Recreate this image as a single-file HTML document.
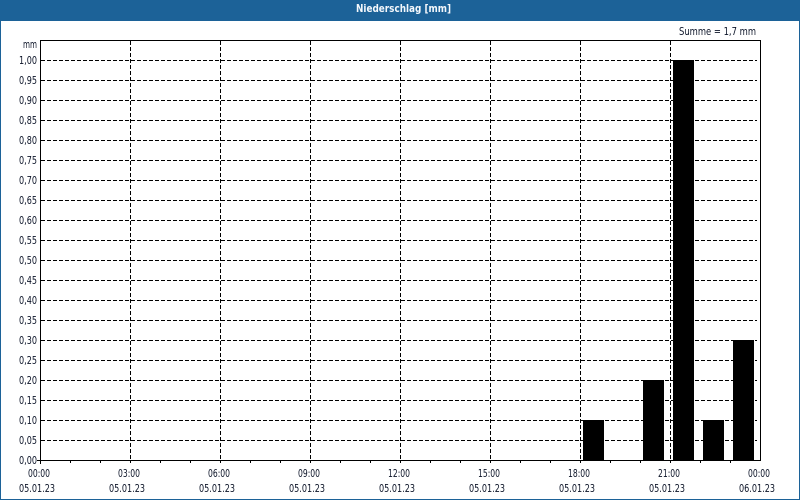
<!DOCTYPE html>
<html><head><meta charset="utf-8"><style>
html,body{margin:0;padding:0;background:#fff;width:800px;height:500px;overflow:hidden}
svg{display:block}
text{font-family:"DejaVu Sans","Liberation Sans",sans-serif;font-size:10.5px;fill:#0c1428}
</style></head><body>
<svg width="800" height="500" viewBox="0 0 800 500" xmlns="http://www.w3.org/2000/svg">
<rect x="0" y="0" width="800" height="500" fill="#1c6298"/>
<rect x="1" y="21" width="798" height="478" fill="#fff"/>
<text x="356" y="12" textLength="95" lengthAdjust="spacingAndGlyphs" style="fill:#f4f8fc;font-weight:bold">Niederschlag [mm]</text>
<text x="679" y="35" textLength="77" lengthAdjust="spacingAndGlyphs">Summe = 1,7 mm</text>
<g stroke="#000" stroke-width="1" stroke-dasharray="4 2" shape-rendering="crispEdges" fill="none">
<path d="M41 60.5H757M41 80.5H757M41 100.5H757M41 120.5H757M41 140.5H757M41 160.5H757M41 180.5H757M41 200.5H757M41 220.5H757M41 240.5H757M41 260.5H757M41 280.5H757M41 300.5H757M41 320.5H757M41 340.5H757M41 360.5H757M41 380.5H757M41 400.5H757M41 420.5H757M41 440.5H757"/>
<path d="M130.5 41V460M220.5 41V460M310.5 41V460M400.5 41V460M490.5 41V460M580.5 41V460M670.5 41V460"/>
</g>
<g fill="#000" shape-rendering="crispEdges">
<rect x="583" y="420" width="21" height="40"/>
<rect x="643" y="380" width="21" height="80"/>
<rect x="673" y="60" width="21" height="400"/>
<rect x="703" y="420" width="21" height="40"/>
<rect x="733" y="340" width="21" height="120"/>
</g>
<g stroke="#000" stroke-width="1" shape-rendering="crispEdges" fill="none">
<path d="M40.5 40V464M40 40.5H760.5V460M37 460.5H761"/>
<path d="M70.5 460V463M100.5 460V463M130.5 460V463M160.5 460V463M190.5 460V463M220.5 460V463M250.5 460V463M280.5 460V463M310.5 460V463M340.5 460V463M370.5 460V463M400.5 460V463M430.5 460V463M460.5 460V463M490.5 460V463M520.5 460V463M550.5 460V463M580.5 460V463M610.5 460V463M640.5 460V463M670.5 460V463M700.5 460V463M730.5 460V463"/>
</g>
<g lengthAdjust="spacingAndGlyphs">
<text x="23" y="48" textLength="14" lengthAdjust="spacingAndGlyphs">mm</text>
<text x="19" y="64" textLength="18" lengthAdjust="spacingAndGlyphs">1,00</text><text x="19" y="84" textLength="18" lengthAdjust="spacingAndGlyphs">0,95</text><text x="19" y="104" textLength="18" lengthAdjust="spacingAndGlyphs">0,90</text><text x="19" y="124" textLength="18" lengthAdjust="spacingAndGlyphs">0,85</text><text x="19" y="144" textLength="18" lengthAdjust="spacingAndGlyphs">0,80</text><text x="19" y="164" textLength="18" lengthAdjust="spacingAndGlyphs">0,75</text><text x="19" y="184" textLength="18" lengthAdjust="spacingAndGlyphs">0,70</text><text x="19" y="204" textLength="18" lengthAdjust="spacingAndGlyphs">0,65</text><text x="19" y="224" textLength="18" lengthAdjust="spacingAndGlyphs">0,60</text><text x="19" y="244" textLength="18" lengthAdjust="spacingAndGlyphs">0,55</text><text x="19" y="264" textLength="18" lengthAdjust="spacingAndGlyphs">0,50</text><text x="19" y="284" textLength="18" lengthAdjust="spacingAndGlyphs">0,45</text><text x="19" y="304" textLength="18" lengthAdjust="spacingAndGlyphs">0,40</text><text x="19" y="324" textLength="18" lengthAdjust="spacingAndGlyphs">0,35</text><text x="19" y="344" textLength="18" lengthAdjust="spacingAndGlyphs">0,30</text><text x="19" y="364" textLength="18" lengthAdjust="spacingAndGlyphs">0,25</text><text x="19" y="384" textLength="18" lengthAdjust="spacingAndGlyphs">0,20</text><text x="19" y="404" textLength="18" lengthAdjust="spacingAndGlyphs">0,15</text><text x="19" y="424" textLength="18" lengthAdjust="spacingAndGlyphs">0,10</text><text x="19" y="444" textLength="18" lengthAdjust="spacingAndGlyphs">0,05</text><text x="19" y="464" textLength="18" lengthAdjust="spacingAndGlyphs">0,00</text>
</g>
<g>
<text x="28" y="477" textLength="22" lengthAdjust="spacingAndGlyphs">00:00</text><text x="118" y="477" textLength="22" lengthAdjust="spacingAndGlyphs">03:00</text><text x="208" y="477" textLength="22" lengthAdjust="spacingAndGlyphs">06:00</text><text x="298" y="477" textLength="22" lengthAdjust="spacingAndGlyphs">09:00</text><text x="388" y="477" textLength="22" lengthAdjust="spacingAndGlyphs">12:00</text><text x="478" y="477" textLength="22" lengthAdjust="spacingAndGlyphs">15:00</text><text x="568" y="477" textLength="22" lengthAdjust="spacingAndGlyphs">18:00</text><text x="658" y="477" textLength="22" lengthAdjust="spacingAndGlyphs">21:00</text><text x="748" y="477" textLength="22" lengthAdjust="spacingAndGlyphs">00:00</text>
<text x="19" y="492" textLength="36" lengthAdjust="spacingAndGlyphs">05.01.23</text><text x="109" y="492" textLength="36" lengthAdjust="spacingAndGlyphs">05.01.23</text><text x="199" y="492" textLength="36" lengthAdjust="spacingAndGlyphs">05.01.23</text><text x="289" y="492" textLength="36" lengthAdjust="spacingAndGlyphs">05.01.23</text><text x="379" y="492" textLength="36" lengthAdjust="spacingAndGlyphs">05.01.23</text><text x="469" y="492" textLength="36" lengthAdjust="spacingAndGlyphs">05.01.23</text><text x="559" y="492" textLength="36" lengthAdjust="spacingAndGlyphs">05.01.23</text><text x="649" y="492" textLength="36" lengthAdjust="spacingAndGlyphs">05.01.23</text><text x="739" y="492" textLength="36" lengthAdjust="spacingAndGlyphs">06.01.23</text>
</g>
</svg>
</body></html>
